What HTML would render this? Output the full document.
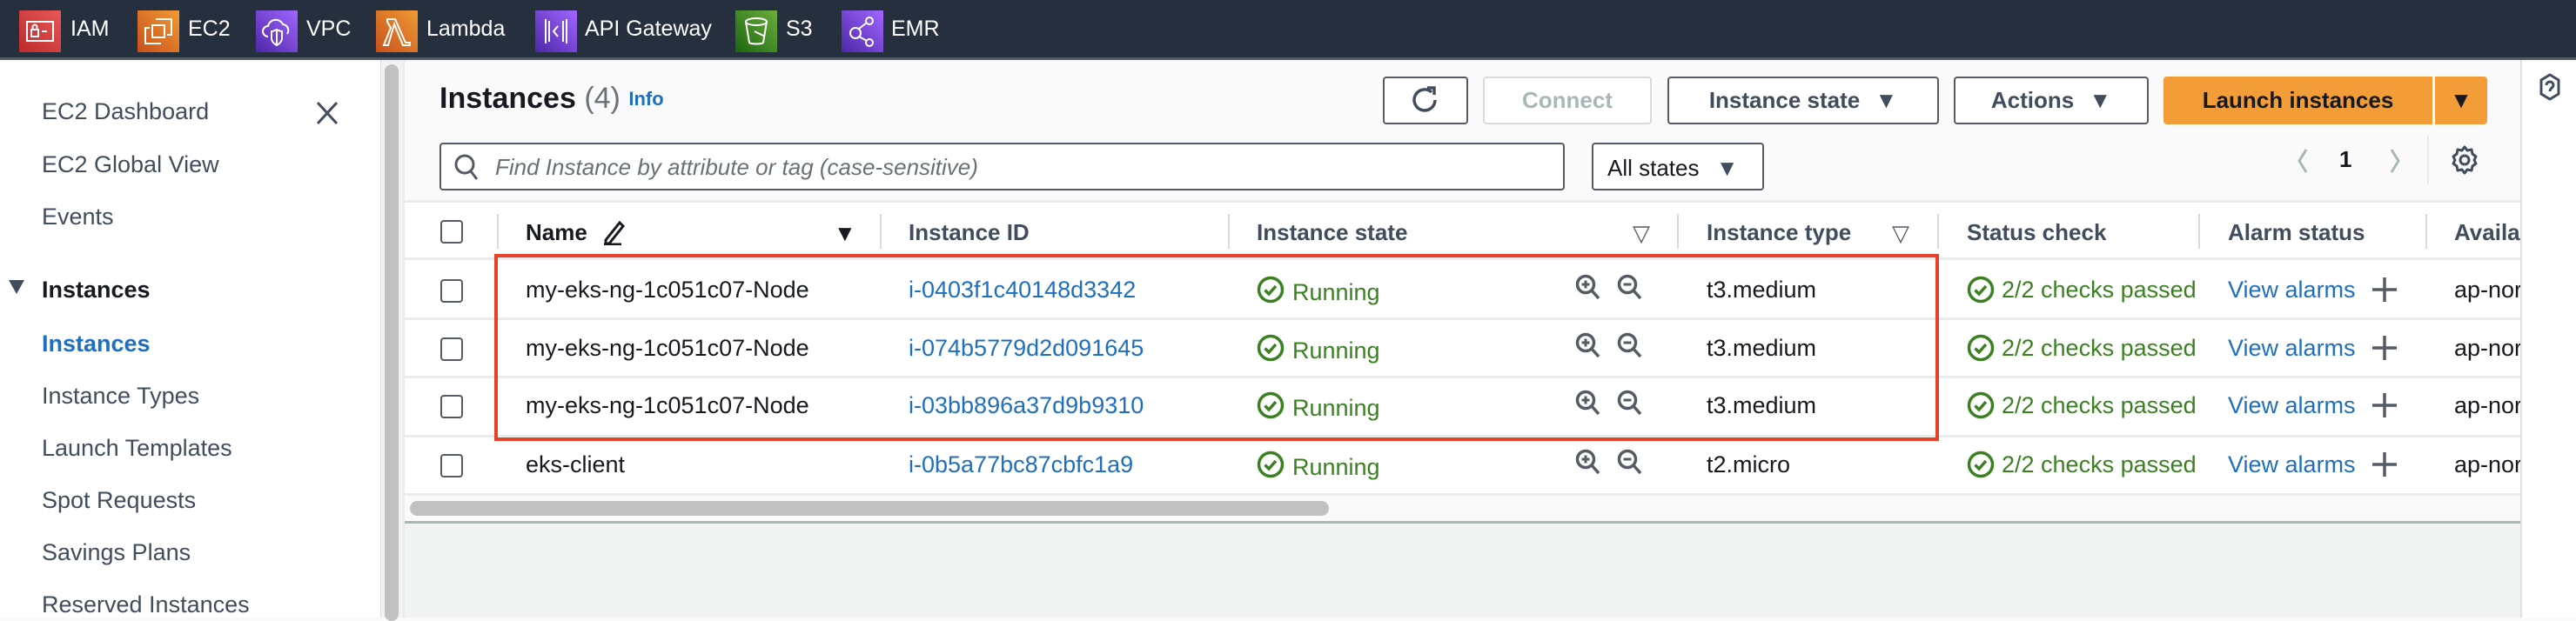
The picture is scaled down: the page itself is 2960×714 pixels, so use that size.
<!DOCTYPE html>
<html><head><meta charset="utf-8"><style>
*{box-sizing:border-box;margin:0;padding:0}
body{width:2960px;height:710px;overflow:hidden;background:#fafafa;font-family:"Liberation Sans",sans-serif;position:relative}
.a{position:absolute;white-space:nowrap}
.nav{left:0;top:0;width:2960px;height:66px;background:#262f3e}
.navline{left:0;top:66px;width:2960px;height:3px;background:#545b64}
.ic{top:12px;width:48px;height:48px;border-radius:1px}
.nt{top:19px;color:#fff;font-size:25px}
.side{left:0;top:69px;width:437px;height:641px;background:#fff}
.sb{color:#414d5c;font-size:27px;left:48px}
.btn{top:88px;height:55px;border:2px solid #545b64;border-radius:4px;background:#fff;color:#414d5c;font-weight:bold;font-size:26px;line-height:51px;text-align:center}
.th{top:252px;color:#414d5c;font-weight:bold;font-size:26px}
.sep{width:2px;background:#d5dbdb;top:246px;height:40px}
.td{font-size:27px;color:#16191f}
.lk{font-size:27px;color:#1f6fc0}
.gr{font-size:27px;color:#3b8122}
.cb{width:26px;height:27px;border:2px solid #545b64;border-radius:4px;background:#fff;left:506px}
.rl{left:465px;width:2431px;height:3px;background:#eaeded}
.ar{font-size:26px}
</style></head><body>
<div class="a nav"></div><div class="a navline"></div>
<svg class="a ic" style="left:22px" viewBox="0 0 48 48"><defs><linearGradient id="g1" x1="0" y1="1" x2="1" y2="0"><stop offset="0" stop-color="#bd2b2b"/><stop offset="1" stop-color="#e85858"/></linearGradient></defs><rect width="48" height="48" fill="url(#g1)"/><rect x="9" y="13" width="30" height="22" fill="none" stroke="#fff" stroke-width="2"/><rect x="14" y="22" width="8" height="8" fill="none" stroke="#fff" stroke-width="2"/><path d="M15.5 22v-3a2.5 2.5 0 0 1 5 0v3M26 24h6" stroke="#fff" stroke-width="2" fill="none"/></svg>
<div class="a nt" style="left:81px">IAM</div>
<svg class="a ic" style="left:158px" viewBox="0 0 48 48"><defs><linearGradient id="g2" x1="0" y1="1" x2="1" y2="0"><stop offset="0" stop-color="#c8511b"/><stop offset="1" stop-color="#f19a35"/></linearGradient></defs><rect width="48" height="48" fill="url(#g2)"/><path d="M21 10h18v18h-5M27 38H9V20h5" stroke="#fff" stroke-width="2" fill="none"/><rect x="17" y="17" width="14" height="14" fill="none" stroke="#fff" stroke-width="2"/></svg>
<div class="a nt" style="left:216px">EC2</div>
<svg class="a ic" style="left:294px" viewBox="0 0 48 48"><defs><linearGradient id="g3" x1="0" y1="1" x2="1" y2="0"><stop offset="0" stop-color="#4d27a8"/><stop offset="1" stop-color="#a166ff"/></linearGradient></defs><rect width="48" height="48" fill="url(#g3)"/><path d="M14 30a6 6 0 0 1 0-12a9 9 0 0 1 17-2a7 7 0 0 1 5 11" stroke="#fff" stroke-width="2" fill="none"/><path d="M24 22c4 2 6 2 6 2v8c0 5-6 8-6 8s-6-3-6-8v-8s2 0 6-2zM24 23v16" stroke="#fff" stroke-width="2" fill="none"/></svg>
<div class="a nt" style="left:352px">VPC</div>
<svg class="a ic" style="left:432px" viewBox="0 0 48 48"><rect width="48" height="48" fill="url(#g2)"/><path d="M13 10h9l12 27h5v3h-8L21 16l-7 24H9l8-20-4-7z" stroke="#fff" stroke-width="2" fill="none"/></svg>
<div class="a nt" style="left:490px">Lambda</div>
<svg class="a ic" style="left:615px" viewBox="0 0 48 48"><rect width="48" height="48" fill="url(#g3)"/><path d="M12 10v28M36 10v28M16 12v24M32 12v24M26 18l-5 6 5 6" stroke="#fff" stroke-width="2" fill="none"/></svg>
<div class="a nt" style="left:672px">API Gateway</div>
<svg class="a ic" style="left:845px" viewBox="0 0 48 48"><defs><linearGradient id="g4" x1="0" y1="1" x2="1" y2="0"><stop offset="0" stop-color="#1b660f"/><stop offset="1" stop-color="#6cae3e"/></linearGradient></defs><rect width="48" height="48" fill="url(#g4)"/><ellipse cx="24" cy="13" rx="12" ry="4" fill="none" stroke="#fff" stroke-width="2"/><path d="M12 13l4 24c1 2 15 2 16 0l4-24M22 24l12 6" stroke="#fff" stroke-width="2" fill="none"/></svg>
<div class="a nt" style="left:903px">S3</div>
<svg class="a ic" style="left:967px" viewBox="0 0 48 48"><rect width="48" height="48" fill="url(#g3)"/><circle cx="16" cy="26" r="6" fill="none" stroke="#fff" stroke-width="2"/><circle cx="32" cy="12" r="4" fill="none" stroke="#fff" stroke-width="2"/><circle cx="32" cy="37" r="4" fill="none" stroke="#fff" stroke-width="2"/><path d="M20 21l9-7M20 30l9 5" stroke="#fff" stroke-width="2"/></svg>
<div class="a nt" style="left:1024px">EMR</div>

<div class="a side"></div>
<div class="a sb" style="top:113px">EC2 Dashboard</div>
<svg class="a" style="left:362px;top:115px" width="28" height="30" viewBox="0 0 28 30"><path d="M3 3l22 24M25 3L3 27" stroke="#414d5c" stroke-width="3"/></svg>
<div class="a sb" style="top:174px">EC2 Global View</div>
<div class="a sb" style="top:234px">Events</div>
<div class="a" style="left:10px;top:322px;width:0;height:0;border-left:9px solid transparent;border-right:9px solid transparent;border-top:16px solid #414d5c"></div>
<div class="a sb" style="top:318px;font-weight:bold;color:#16191f">Instances</div>
<div class="a sb" style="top:380px;font-weight:bold;color:#1f6fc0">Instances</div>
<div class="a sb" style="top:440px">Instance Types</div>
<div class="a sb" style="top:500px">Launch Templates</div>
<div class="a sb" style="top:560px">Spot Requests</div>
<div class="a sb" style="top:620px">Savings Plans</div>
<div class="a sb" style="top:680px">Reserved Instances</div>
<div class="a" style="left:437px;top:69px;width:28px;height:641px;background:#f2f3f3;border-left:1px solid #e0e0e0"></div>
<div class="a" style="left:442px;top:74px;width:16px;height:640px;background:#c1c1c1;border-radius:8px"></div>
<div class="a" style="left:463px;top:69px;width:2px;height:641px;background:#eaeded"></div>

<div class="a" style="left:2896px;top:69px;width:64px;height:641px;background:#fff;border-left:2px solid #e0e0e0"></div>
<svg class="a" style="left:2917px;top:84px" width="26" height="32" viewBox="0 0 26 32"><path d="M13 2l10 6v16l-10 6-10-6V8z" fill="none" stroke="#414d5c" stroke-width="3"/><path d="M9 14a4 4 0 0 1 8 0c0 3-4 3-4 7" fill="none" stroke="#414d5c" stroke-width="3"/></svg>

<div class="a" style="left:465px;top:599px;width:2431px;height:111px;background:#f2f3f3;border-top:3px solid #aab7b8"></div>

<div class="a" style="left:505px;top:94px;font-size:34px;font-weight:bold;color:#16191f">Instances <span style="font-weight:normal;color:#687078">(4)</span> <span style="font-size:22px;color:#1f6fc0;vertical-align:3px">Info</span></div>
<div class="a btn" style="left:1589px;width:98px"><svg width="34" height="40" viewBox="0 0 34 40" style="margin-top:6px"><path d="M24 10a12 12 0 1 0 4 9" fill="none" stroke="#414d5c" stroke-width="3.5"/><path d="M19 5h8v8" fill="none" stroke="#414d5c" stroke-width="3.5"/></svg></div>
<div class="a btn" style="left:1704px;width:194px;border-color:#d5dbdb;color:#aab7b8">Connect</div>
<div class="a btn" style="left:1916px;width:312px">Instance state <span class="ar" style="margin-left:10px">▼</span></div>
<div class="a btn" style="left:2245px;width:224px">Actions <span class="ar" style="margin-left:10px">▼</span></div>
<div class="a btn" style="left:2486px;width:309px;background:#f29d38;border-color:#f29d38;color:#16191f;border-radius:4px 0 0 4px">Launch instances</div>
<div class="a btn" style="left:2798px;width:60px;background:#f29d38;border-color:#f29d38;color:#16191f;border-radius:0 4px 4px 0;font-size:26px">▼</div>

<div class="a" style="left:505px;top:164px;width:1293px;height:55px;border:2px solid #545b64;border-radius:4px;background:#fff"></div>
<svg class="a" style="left:521px;top:176px" width="30" height="34" viewBox="0 0 30 34"><circle cx="13" cy="13" r="10" fill="none" stroke="#545b64" stroke-width="3"/><path d="M20 21l7 9" stroke="#545b64" stroke-width="3"/></svg>
<div class="a" style="left:569px;top:177px;font-size:26px;font-style:italic;color:#687078">Find Instance by attribute or tag (case-sensitive)</div>
<div class="a" style="left:1829px;top:164px;width:198px;height:55px;border:2px solid #545b64;border-radius:4px;background:#fff;font-size:26px;color:#16191f;padding:12px 0 0 16px">All states <span class="ar" style="margin-left:12px;color:#414d5c">▼</span></div>
<svg class="a" style="left:2630px;top:168px" width="140" height="34" viewBox="0 0 140 34"><path d="M20 4l-8 13 8 13" fill="none" stroke="#aab7b8" stroke-width="3"/><path d="M118 4l8 13-8 13" fill="none" stroke="#aab7b8" stroke-width="3"/></svg>
<div class="a" style="left:2688px;top:168px;font-size:26px;font-weight:bold;color:#16191f">1</div>
<div class="a" style="left:2789px;top:155px;width:2px;height:57px;background:#eaeded"></div>
<svg class="a" style="left:2815px;top:166px" width="34" height="36" viewBox="0 0 34 36"><circle cx="17" cy="18" r="5" fill="none" stroke="#414d5c" stroke-width="3"/><path d="M17 3l3 4 5-1 1 5 4 3-2 4 2 4-4 3-1 5-5-1-3 4-3-4-5 1-1-5-4-3 2-4-2-4 4-3 1-5 5 1z" fill="none" stroke="#414d5c" stroke-width="3" stroke-linejoin="round"/></svg>

<div class="a" style="left:465px;top:230px;width:2431px;height:369px;background:#fff"></div>
<div class="a rl" style="top:230px"></div>
<div class="a rl" style="top:296px"></div>
<div class="a rl" style="top:365px"></div>
<div class="a rl" style="top:432px"></div>
<div class="a rl" style="top:500px"></div>
<div class="a rl" style="top:567px"></div>
<div class="a" style="left:465px;top:570px;width:2431px;height:29px;background:#fafafa"></div>
<div class="a" style="left:471px;top:576px;width:1056px;height:17px;background:#c1c1c1;border-radius:9px"></div>

<div class="a cb" style="top:253px"></div>
<div class="a sep" style="left:571px"></div>
<div class="a th" style="left:604px;color:#16191f">Name</div>
<svg class="a" style="left:692px;top:252px" width="30" height="30" viewBox="0 0 30 30"><path d="M4 24L20 4l4 4L8 28H4zM2 29h20" fill="none" stroke="#16191f" stroke-width="3"/></svg>
<div class="a" style="left:958px;top:253px;font-size:26px;color:#16191f">▼</div>
<div class="a sep" style="left:1011px"></div>
<div class="a th" style="left:1044px">Instance ID</div>
<div class="a sep" style="left:1411px"></div>
<div class="a th" style="left:1444px">Instance state</div>
<div class="a" style="left:1876px;top:253px;font-size:26px;color:#545b64">▽</div>
<div class="a sep" style="left:1927px"></div>
<div class="a th" style="left:1961px">Instance type</div>
<div class="a" style="left:2174px;top:253px;font-size:26px;color:#545b64">▽</div>
<div class="a sep" style="left:2226px"></div>
<div class="a th" style="left:2260px">Status check</div>
<div class="a sep" style="left:2526px"></div>
<div class="a th" style="left:2560px">Alarm status</div>
<div class="a sep" style="left:2787px"></div>
<div class="a th" style="left:2820px;width:76px;overflow:hidden">Availability</div>

<div id="rows"></div>
<script>
var R=[["my-eks-ng-1c051c07-Node","i-0403f1c40148d3342","t3.medium",318],["my-eks-ng-1c051c07-Node","i-074b5779d2d091645","t3.medium",385],["my-eks-ng-1c051c07-Node","i-03bb896a37d9b9310","t3.medium",451],["eks-client","i-0b5a77bc87cbfc1a9","t2.micro",519]];
var chk='<svg width="32" height="32" viewBox="0 0 32 32"><circle cx="16" cy="16" r="13.5" fill="none" stroke="#3b8122" stroke-width="3.5"/><path d="M9.5 16.5l4.5 4.5 8-9" fill="none" stroke="#3b8122" stroke-width="3.5"/></svg>';
function mag(p){return '<svg width="30" height="32" viewBox="0 0 30 32"><circle cx="12" cy="12" r="9.5" fill="none" stroke="#545b64" stroke-width="3.5"/><path d="M19 19l8 9" stroke="#545b64" stroke-width="3.5"/><path d="M7.5 12h9'+(p?'M12 7.5v9':'')+'" stroke="#545b64" stroke-width="3"/></svg>';}
var h='';
R.forEach(function(r){var t=r[3];
h+='<div class="a cb" style="top:'+(t+3)+'px"></div>';
h+='<div class="a td" style="left:604px;top:'+t+'px">'+r[0]+'</div>';
h+='<div class="a lk" style="left:1044px;top:'+t+'px">'+r[1]+'</div>';
h+='<div class="a" style="left:1444px;top:'+(t-1)+'px">'+chk+'</div>';
h+='<div class="a gr" style="left:1485px;top:'+(t+3)+'px">Running</div>';
h+='<div class="a" style="left:1810px;top:'+(t-3)+'px">'+mag(1)+'</div>';
h+='<div class="a" style="left:1858px;top:'+(t-3)+'px">'+mag(0)+'</div>';
h+='<div class="a td" style="left:1961px;top:'+t+'px">'+r[2]+'</div>';
h+='<div class="a" style="left:2260px;top:'+(t-1)+'px">'+chk+'</div>';
h+='<div class="a gr" style="left:2300px;top:'+t+'px;width:226px;overflow:hidden">2/2 checks passed</div>';
h+='<div class="a lk" style="left:2560px;top:'+t+'px">View alarms</div>';
h+='<svg class="a" style="left:2724px;top:'+(t-1)+'px" width="32" height="32" viewBox="0 0 32 32"><path d="M16 2v28M2 16h28" stroke="#545b64" stroke-width="3.5"/></svg>';
h+='<div class="a td" style="left:2820px;top:'+t+'px;width:76px;overflow:hidden">ap-northeast-2a</div>';
});
document.getElementById('rows').innerHTML=h;
</script>
<div class="a" style="left:568px;top:292px;width:1660px;height:215px;border:4px solid #e8412a"></div>
</body></html>
